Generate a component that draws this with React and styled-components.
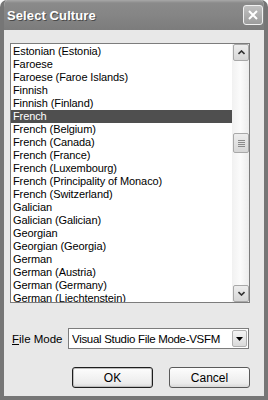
import React, { useState } from 'react';
import styled, { createGlobalStyle } from 'styled-components';

const GlobalStyle = createGlobalStyle`
	html, body {
		margin: 0;
		padding: 0;
		background: #ffffff;
	}
	* {
		box-sizing: border-box;
	}
`;

const Window = styled.div`
	width: 268px;
	height: 400px;
	display: flex;
	flex-direction: column;
	background: #e8e8e8;
	border-left: 4px solid #767676;
	border-right: 4px solid #767676;
	border-bottom: 4px solid #767676;
	border-radius: 7px 7px 0 0;
	font-family: 'Liberation Sans', Arial, sans-serif;
	font-size: 11px;
	color: #000;
	overflow: hidden;
`;

const TitleBar = styled.div`
	height: 30px;
	margin: 0 -4px;
	padding: 0 5px 0 7px;
	display: flex;
	align-items: center;
	justify-content: space-between;
	background: linear-gradient(#a8a8a8 0, #8a8a8a 3px, #858585 50%, #7c7c7c 100%);
	border-radius: 7px 7px 0 0;
`;

const Title = styled.span`
	font-size: 13px;
	font-weight: bold;
	color: #fff;
	text-shadow: 1px 1px 0 #4a4a4a;
	letter-spacing: 0.1px;
`;

const CloseButton = styled.div`
	width: 20px;
	height: 20px;
	border: 1px solid #f0f0f0;
	border-radius: 3px;
	background: linear-gradient(#c0c0c0, #9c9c9c);
	display: flex;
	align-items: center;
	justify-content: center;
`;

const Body = styled.div`
	flex: 1;
	display: flex;
	flex-direction: column;
	padding: 13px 14px 0 6px;
`;

const ListBox = styled.div`
	width: 240px;
	height: 260px;
	border: 1px solid #7c7c7c;
	background: #fff;
	display: flex;
	overflow: hidden;
`;

const Items = styled.div`
	flex: 1;
	padding-top: 1px;
	overflow: hidden;
`;

const Item = styled.div`
	height: 13px;
	line-height: 13px;
	padding-left: 2px;
	white-space: nowrap;
	letter-spacing: -0.1px;
	background: ${(p) => (p.$selected ? '#4f4f4f' : 'transparent')};
	color: ${(p) => (p.$selected ? '#fff' : '#000')};
`;

const ScrollBar = styled.div`
	width: 17px;
	display: flex;
	flex-direction: column;
	background: linear-gradient(90deg, #f1f1f1, #fbfbfb 50%, #ececec);
`;

const Track = styled.div`
	flex: 1;
	padding-top: 72px;
`;

const ScrollButton = styled.div`
	width: 16px;
	height: 17px;
	margin-left: 1px;
	border: 1px solid #a8a8a8;
	border-radius: 2px;
	background: linear-gradient(#ededed, #d6d6d6);
	display: flex;
	align-items: center;
	justify-content: center;
`;

const Thumb = styled(ScrollButton)`
	height: 20px;
	flex-direction: column;
	gap: 1px;
`;

const Grip = styled.span`
	width: 7px;
	height: 1px;
	background: #8a8a8a;
`;

const FileRow = styled.div`
	display: flex;
	align-items: center;
	margin-top: 25px;
	padding-left: 2px;
`;

const Label = styled.span`
	width: 56px;
	font-size: 11.5px;
	span {
		text-decoration: underline;
	}
`;

const Combo = styled.div`
	width: 181px;
	height: 21px;
	border: 1px solid #7c7c7c;
	background: #fff;
	display: flex;
	align-items: center;
	padding: 0 1px 0 3px;
	font-size: 11.5px;
	letter-spacing: -0.3px;
`;

const ComboText = styled.span`
	flex: 1;
	white-space: nowrap;
	overflow: hidden;
`;

const DropButton = styled.div`
	width: 15px;
	height: 17px;
	border: 1px solid #b0b0b0;
	border-radius: 2px;
	background: linear-gradient(#f4f4f4, #dadada);
	display: flex;
	align-items: center;
	justify-content: center;
`;

const ButtonRow = styled.div`
	display: flex;
	gap: 16px;
	margin-top: 18px;
	padding-left: 62px;
`;

const Button = styled.button`
	width: 81px;
	height: 21px;
	padding: 0;
	font-family: 'Liberation Sans', Arial, sans-serif;
	font-size: 12px;
	color: #000;
	border-radius: 3px;
	border: 1px solid ${(p) => (p.$default ? '#1e1e1e' : '#5a5a5a')};
	background: linear-gradient(#fdfdfd, #ececec 80%, #d8d8d8);
	box-shadow: ${(p) => (p.$default ? 'inset 0 0 0 1px #bdbdbd' : 'none')};
`;

const cultures = [
	'Estonian (Estonia)',
	'Faroese',
	'Faroese (Faroe Islands)',
	'Finnish',
	'Finnish (Finland)',
	'French',
	'French (Belgium)',
	'French (Canada)',
	'French (France)',
	'French (Luxembourg)',
	'French (Principality of Monaco)',
	'French (Switzerland)',
	'Galician',
	'Galician (Galician)',
	'Georgian',
	'Georgian (Georgia)',
	'German',
	'German (Austria)',
	'German (Germany)',
	'German (Liechtenstein)',
];

const Chevron = ({ up }) => (
	<svg width="7" height="5" viewBox="0 0 7 5">
		<path
			d={up ? 'M0.5 4 L3.5 1 L6.5 4' : 'M0.5 1 L3.5 4 L6.5 1'}
			fill="none"
			stroke="#333"
			strokeWidth="1.6"
		/>
	</svg>
);

const App = () => {
	const [selected, setSelected] = useState('French');

	return (
		<>
			<GlobalStyle />
			<Window>
				<TitleBar>
					<Title>Select Culture</Title>
					<CloseButton>
						<svg width="10" height="10" viewBox="0 0 10 10">
							<path d="M1 1 L9 9 M9 1 L1 9" stroke="#fff" strokeWidth="2" />
						</svg>
					</CloseButton>
				</TitleBar>
				<Body>
					<ListBox>
						<Items>
							{cultures.map((c) => (
								<Item key={c} $selected={c === selected} onClick={() => setSelected(c)}>
									{c}
								</Item>
							))}
						</Items>
						<ScrollBar>
							<ScrollButton>
								<Chevron up />
							</ScrollButton>
							<Track>
								<Thumb>
									<Grip />
									<Grip />
									<Grip />
									<Grip />
								</Thumb>
							</Track>
							<ScrollButton>
								<Chevron />
							</ScrollButton>
						</ScrollBar>
					</ListBox>
					<FileRow>
						<Label>
							<span>F</span>ile Mode
						</Label>
						<Combo>
							<ComboText>Visual Studio File Mode-VSFM</ComboText>
							<DropButton>
								<svg width="7" height="4" viewBox="0 0 7 4">
									<path d="M0 0 H7 L3.5 4 Z" fill="#000" />
								</svg>
							</DropButton>
						</Combo>
					</FileRow>
					<ButtonRow>
						<Button $default>OK</Button>
						<Button>Cancel</Button>
					</ButtonRow>
				</Body>
			</Window>
		</>
	);
};

export default App;
